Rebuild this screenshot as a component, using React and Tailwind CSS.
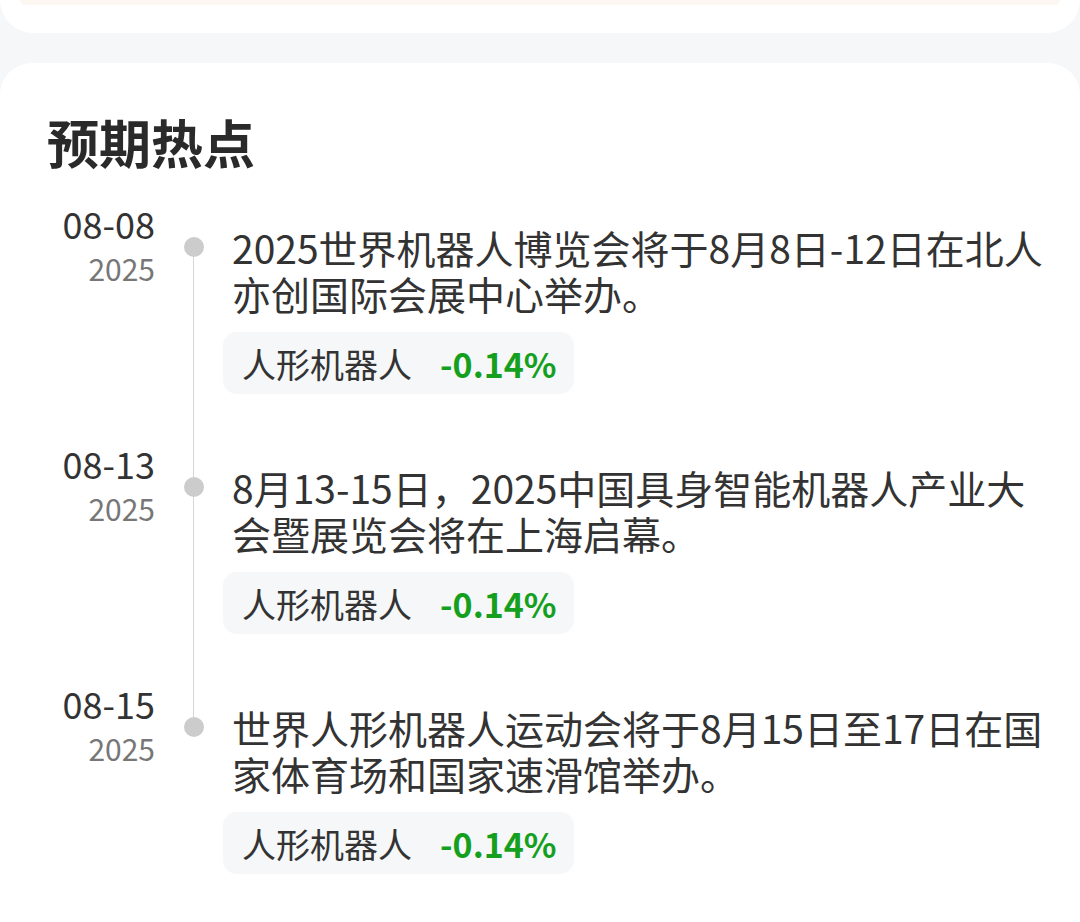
const events = [
  {
    date: '08-08',
    year: '2025',
    text: '2025世界机器人博览会将于8月8日-12日在北人亦创国际会展中心举办。',
    tag: '人形机器人',
    change: '-0.14%',
  },
  {
    date: '08-13',
    year: '2025',
    text: '8月13-15日，2025中国具身智能机器人产业大会暨展览会将在上海启幕。',
    tag: '人形机器人',
    change: '-0.14%',
  },
  {
    date: '08-15',
    year: '2025',
    text: '世界人形机器人运动会将于8月15日至17日在国家体育场和国家速滑馆举办。',
    tag: '人形机器人',
    change: '-0.14%',
  },
];

function TimelineItem({ item, first, last }) {
  return (
    <div className="flex">
      {/* date column */}
      <div className="w-[155px] shrink-0 pt-[1px] text-right">
        <div className="text-[36px] leading-[44px] text-[#333]">{item.date}</div>
        <div className="mt-[3px] text-[30px] leading-[40px] text-[#777]">{item.year}</div>
      </div>

      {/* dot + line */}
      <div className="w-[77px] shrink-0 flex flex-col items-center">
        <div className={`h-[37px] w-px ${first ? 'bg-transparent' : 'bg-[#d6d6d6]'}`} />
        <div className="h-[20px] w-[20px] rounded-full bg-[#cccccc]" />
        <div className={`flex-1 w-px ${last ? 'bg-transparent' : 'bg-[#d6d6d6]'}`} />
      </div>

      {/* content */}
      <div className="flex-1 pt-[24px] pb-[46px] pr-[24px]">
        <p className="text-[39px] leading-[46px] text-[#333]">{item.text}</p>
        <div className="mt-[16px] -ml-[9px] inline-flex h-[62px] items-center gap-[28px] rounded-[14px] bg-[#f6f7f9] pl-[19px] pr-[17px]">
          <span className="text-[34px] text-[#333]">{item.tag}</span>
          <span className="text-[34px] font-bold text-[#14a01e]">{item.change}</span>
        </div>
      </div>
    </div>
  );
}

export default function App() {
  return (
    <div className="flex min-h-screen flex-col bg-[#f6f7f9] font-['Noto_Sans_CJK_SC','Noto_Sans',sans-serif]">
      {/* bottom of previous card */}
      <div className="h-[33px] rounded-b-[33px] bg-white px-[20px]">
        <div className="h-[5px] rounded-b-[20px] bg-[#fdf7f2]" />
      </div>

      <div className="mt-[30px] flex-1 rounded-t-[32px] bg-white pt-[49px]">
        <h2 className="pl-[47px] text-[52px] font-bold leading-[60px] text-[#2a2a2a]">预期热点</h2>

        <div className="mt-[28px]">
          {events.map((item, i) => (
            <TimelineItem key={item.date} item={item} first={i === 0} last={i === events.length - 1} />
          ))}
        </div>
      </div>
    </div>
  );
}
